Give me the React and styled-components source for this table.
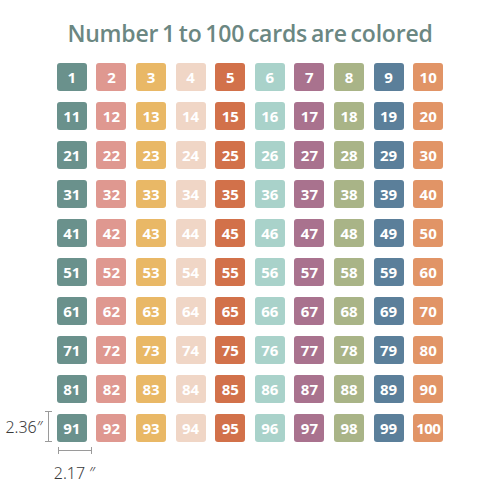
import styled, { createGlobalStyle } from "styled-components";

const GlobalStyle = createGlobalStyle`
  body {
    margin: 0;
    background: #ffffff;
    font-family: "Open Sans", "Noto Sans", sans-serif;
  }
`;

const colors = [
  "#6a918c",
  "#df9890",
  "#e9b866",
  "#f0d6c6",
  "#d2714a",
  "#a9d2ca",
  "#a9728e",
  "#a9b487",
  "#5b7f9a",
  "#e19466",
];

const Page = styled.div`
  width: 500px;
  height: 500px;
  display: flex;
  flex-direction: column;
  align-items: center;
  overflow: hidden;
`;

const Title = styled.h1`
  margin: 17px 0 0;
  font-size: 23px;
  font-weight: 600;
  color: #6b8782;
  letter-spacing: -0.2px;
  word-spacing: -2px;
  line-height: 32px;
`;

const Board = styled.div`
  width: 100%;
  margin-top: 14px;
  display: grid;
  grid-template-columns: 1fr auto 1fr;
`;

const Side = styled.div`
  display: flex;
  justify-content: flex-end;
  align-items: flex-end;
  gap: 2px;
  padding-right: 5px;
  padding-bottom: 0;
`;

const Grid = styled.div`
  display: grid;
  grid-template-columns: repeat(10, 30px);
  column-gap: 9.6px;
  row-gap: 11px;
`;

const Card = styled.div`
  width: 30px;
  height: 28px;
  border-radius: 3px;
  background: ${(p) => p.$bg};
  color: #ffffff;
  font-size: 15px;
  font-weight: 700;
  display: flex;
  align-items: center;
  justify-content: center;
  letter-spacing: ${(p) => (p.$wide ? "-0.6px" : "0")};
`;

const Below = styled.div`
  grid-column: 2;
  display: flex;
  flex-direction: column;
  align-items: flex-start;
  padding-top: 5px;
`;

const Label = styled.span`
  font-family: "Noto Sans", "Open Sans", sans-serif;
  font-size: 16px;
  font-weight: 300;
  color: #3a3a3a;
  white-space: nowrap;
  line-height: 20px;
`;

const SideLabel = styled(Label)`
  margin-bottom: 5px;
`;

const BelowLabel = styled(Label)`
  margin-top: 9px;
  margin-left: -3px;
`;

const VBeam = () => (
  <svg width="7" height="31" viewBox="0 0 7 31">
    <path d="M0 0.5H7M3.5 0.5V30.5M0 30.5H7" stroke="#9a9a9a" strokeWidth="1" fill="none" />
  </svg>
);

const HBeam = () => (
  <svg width="34" height="7" viewBox="0 0 34 7" style={{ marginLeft: 1 }}>
    <path d="M0.5 0V7M0.5 3.5H33.5M33.5 0V7" stroke="#9a9a9a" strokeWidth="1" fill="none" />
  </svg>
);

export default function App() {
  const nums = Array.from({ length: 100 }, (_, i) => i + 1);
  return (
    <Page>
      <GlobalStyle />
      <Title>Number 1 to 100 cards are colored</Title>
      <Board>
        <Side>
          <SideLabel>2.36″</SideLabel>
          <VBeam />
        </Side>
        <Grid>
          {nums.map((n) => (
            <Card key={n} $bg={colors[(n - 1) % 10]} $wide={n === 100}>
              {n}
            </Card>
          ))}
        </Grid>
        <Below>
          <HBeam />
          <BelowLabel>2.17 ″</BelowLabel>
        </Below>
      </Board>
    </Page>
  );
}
